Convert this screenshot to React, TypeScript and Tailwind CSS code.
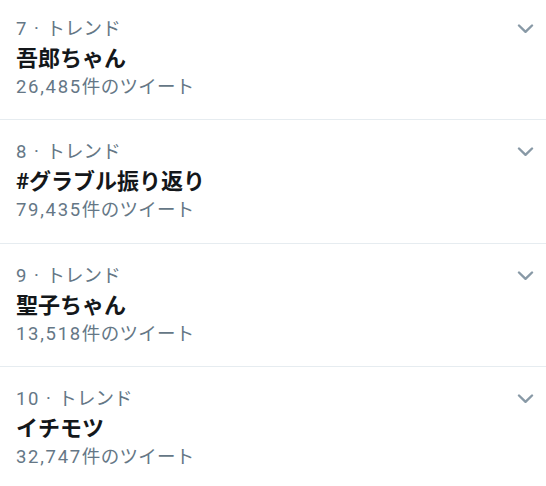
import React from 'react';

interface Trend {
  rank: number;
  name: string;
  count: string;
}

const trends: Trend[] = [
  { rank: 7, name: '吾郎ちゃん', count: '26,485' },
  { rank: 8, name: '#グラブル振り返り', count: '79,435' },
  { rank: 9, name: '聖子ちゃん', count: '13,518' },
  { rank: 10, name: 'イチモツ', count: '32,747' },
];

const Chevron = () => (
  <svg width="17" height="10" viewBox="0 0 17 10" className="shrink-0 mt-[9px]">
    <polyline points="2,1.5 8.5,7.8 15,1.5" fill="none" stroke="#8899a6" strokeWidth="2.4" strokeLinecap="round" strokeLinejoin="round" />
  </svg>
);

const TrendRow = ({ trend }: { trend: Trend }) => (
  <div className="flex items-start justify-between pl-4 pr-[12px] pt-[18px] pb-[17.5px] border-b border-[#e6ecf0]">
    <div className="flex flex-col">
      <div className="text-[18.5px] leading-[29px] text-[#657786]">
        <span className="tracking-[1.5px]">{trend.rank} · </span>
        <span className="tracking-[0.1px]">トレンド</span>
      </div>
      <div className="text-[22px] leading-[29px] font-bold text-[#14171a]">{trend.name}</div>
      <div className="text-[18.5px] leading-[29px] text-[#657786]">
        <span className="tracking-[1.7px]">{trend.count}</span>
        <span className="tracking-[0.3px]">件のツイート</span>
      </div>
    </div>
    <Chevron />
  </div>
);

export default function App() {
  return (
    <div
      className="w-[546px] h-[486px] overflow-hidden bg-white"
      style={{ fontFamily: 'Roboto, "Noto Sans CJK JP", sans-serif' }}
    >
      <div className="-mt-[3.5px]">
        {trends.map(t => (
          <TrendRow key={t.rank} trend={t} />
        ))}
      </div>
    </div>
  );
}
